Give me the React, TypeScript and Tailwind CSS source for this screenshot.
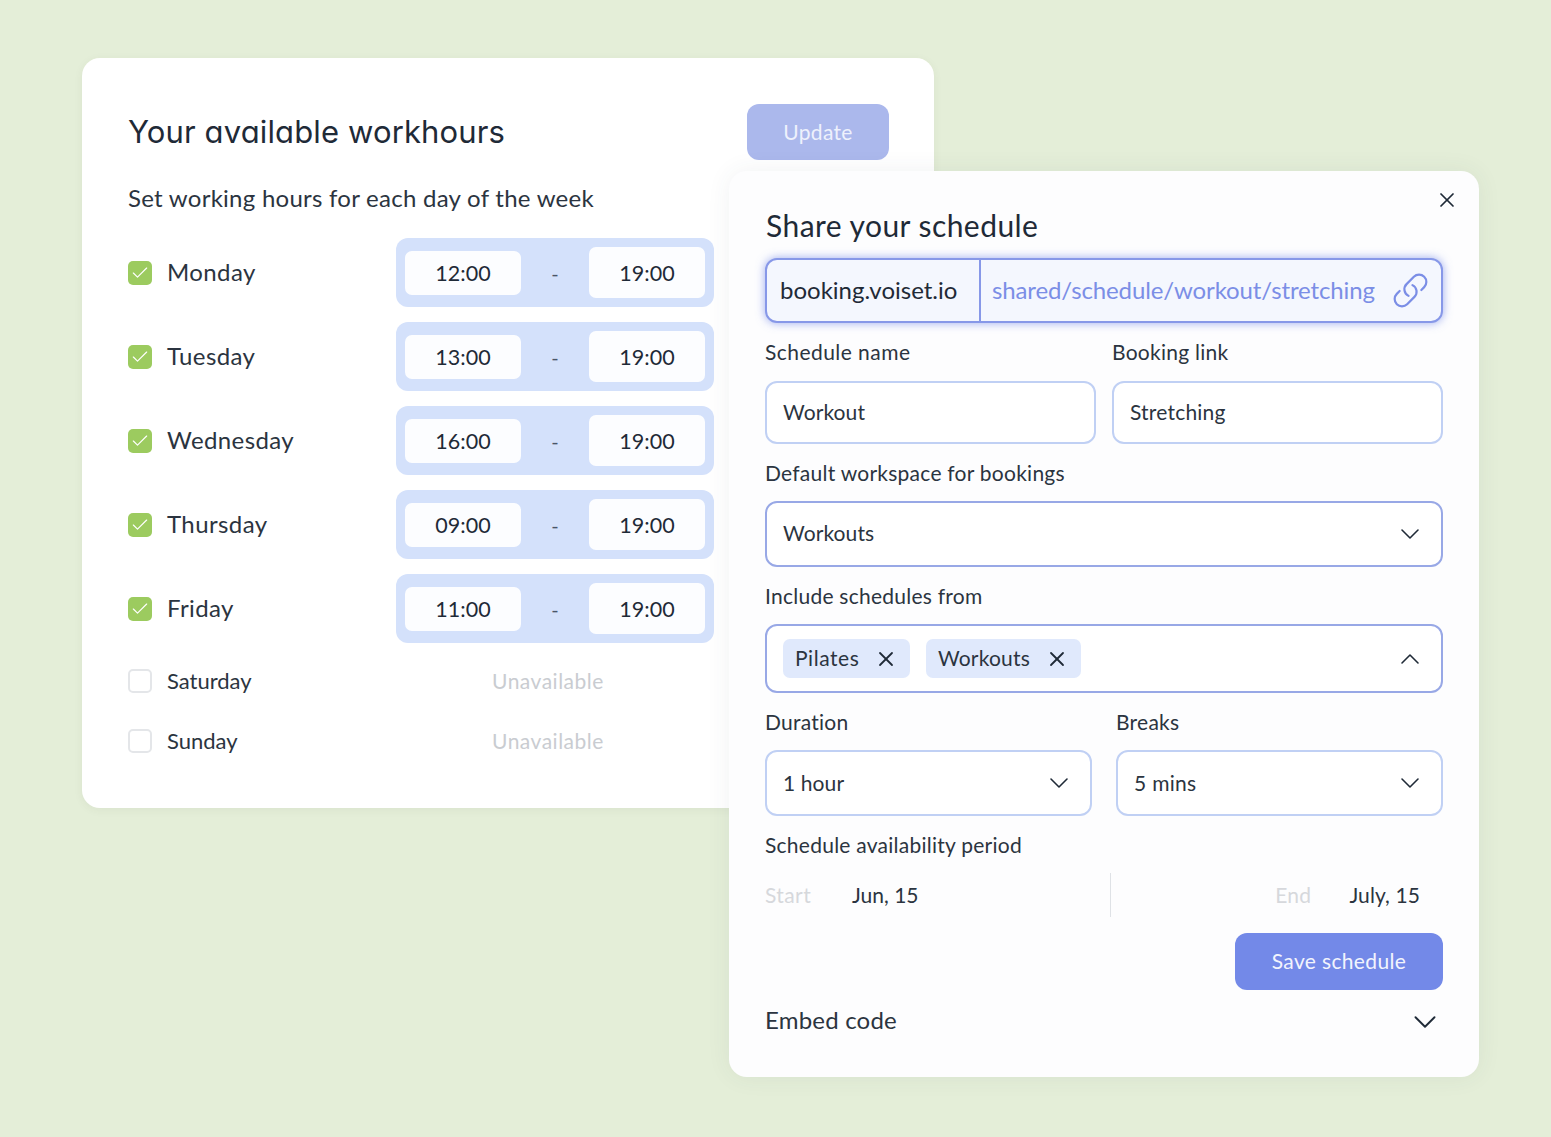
import { Check, ChevronDown, ChevronUp, X } from "lucide-react";

const workdays = [
  { name: "Monday", from: "12:00", to: "19:00" },
  { name: "Tuesday", from: "13:00", to: "19:00" },
  { name: "Wednesday", from: "16:00", to: "19:00" },
  { name: "Thursday", from: "09:00", to: "19:00" },
  { name: "Friday", from: "11:00", to: "19:00" },
];

function FieldLabel({ children }: { children: string }) {
  return <div className="flex h-[57px] items-center text-[21px] tracking-[0.25px] text-[#2b3440]">{children}</div>;
}

function Chain() {
  return (
    <svg viewBox="0 0 24 24" fill="none" stroke="currentColor" strokeWidth={1.35} strokeLinecap="round" strokeLinejoin="round" className="h-[39px] w-[39px]">
      <path d="M13.19 8.688a4.5 4.5 0 0 1 1.242 7.244l-4.5 4.5a4.5 4.5 0 0 1-6.364-6.364l1.757-1.757m13.35-.622 1.757-1.757a4.5 4.5 0 0 0-6.364-6.364l-4.5 4.5a4.5 4.5 0 0 0 1.242 7.244" />
    </svg>
  );
}

function Workhours() {
  return (
    <div className="absolute left-[82px] top-[58px] h-[750px] w-[852px] rounded-[18px] bg-white pl-[46px] pr-[45px] pt-[46px] shadow-[0_2px_10px_rgba(60,70,50,0.06)]">
      <div className="flex h-[56px] items-center justify-between">
        <h1 className="font-['Inter',sans-serif] text-[31px] font-normal tracking-[0.13px] text-[#1f2a37] [font-feature-settings:'cv11']">Your available workhours</h1>
        <button className="h-[56px] w-[142px] rounded-[12px] bg-[#abb8ec] pb-[1px] text-[21px] tracking-[0.3px] text-[#eef1fc]">Update</button>
      </div>
      <p className="flex h-[78px] items-center pb-[2px] text-[24px] tracking-[0.26px] text-[#2b3440]">Set working hours for each day of the week</p>

      <div className="flex flex-col gap-[15px]">
        {workdays.map((day) => (
          <div key={day.name} className="flex h-[69px] items-center">
            <div className="flex w-[268px] items-center gap-[15px]">
              <span className="flex h-[24px] w-[24px] items-center justify-center rounded-[5px] bg-[#9ccb5f]">
                <Check className="h-[20px] w-[20px] text-white" strokeWidth={1.4} />
              </span>
              <span className="pb-[2px] text-[24px] tracking-[0.4px] text-[#2b3440]">{day.name}</span>
            </div>
            <div className="flex h-[69px] w-[318px] items-center justify-between rounded-[12px] bg-[#d4e1fb] px-[9px]">
              <div className="flex h-[44px] w-[116px] items-center justify-center rounded-[7px] bg-[#fcfdff] pt-[1px] text-[21.5px] text-[#1f2a37]">{day.from}</div>
              <span className="text-[20px] text-[#4a5568]">-</span>
              <div className="flex h-[51px] w-[116px] items-center justify-center rounded-[7px] bg-[#fcfdff] pt-[1px] text-[21.5px] text-[#1f2a37]">{day.to}</div>
            </div>
          </div>
        ))}
      </div>

      <div className="mt-[8px]">
        {["Saturday", "Sunday"].map((name) => (
          <div key={name} className="flex h-[60px] items-center">
            <div className="flex w-[364px] items-center gap-[15px]">
              <span className="h-[24px] w-[24px] rounded-[5px] border-2 border-[#e4e6e9] bg-white" />
              <span className="pb-[2px] text-[22px] text-[#2b3440]">{name}</span>
            </div>
            <span className="text-[21px] tracking-[0.5px] text-[#c9ccd1]">Unavailable</span>
          </div>
        ))}
      </div>
    </div>
  );
}

function ShareSchedule() {
  return (
    <div className="absolute left-[729px] top-[171px] h-[906px] w-[750px] rounded-[18px] bg-[#fdfdfe] px-[36px] pt-[36px] shadow-[0_0_24px_rgba(60,70,90,0.07)]">
      <X className="absolute right-[20px] top-[17px] h-[24px] w-[24px] text-[#1f2a37]" strokeWidth={1.7} />
      <h2 className="h-[38px] pl-px text-[30px] leading-[36px] tracking-[0.45px] text-[#1f2a37]">Share your schedule</h2>

      <div className="mt-[13px] flex h-[65px] items-center rounded-[12px] border-2 border-[#8798e8] bg-[#f4f7fe] shadow-[0_0_10px_rgba(115,137,232,0.7)]">
        <div className="flex h-full w-[214px] items-center border-r-2 border-[#8798e8] pb-[2px] pl-[13px] text-[24px] text-[#1f2a37]">booking.voiset.io</div>
        <div className="flex flex-1 items-center justify-between pl-[11px] pr-[11px] text-[24px] tracking-[-0.12px] text-[#7b8ee6]">
          <span className="pb-[2px]">shared/schedule/workout/stretching</span>
          <Chain />
        </div>
      </div>

      <div className="grid grid-cols-[331px_331px] gap-x-[16px]">
        <div className="flex h-[58px] items-center text-[21px] tracking-[0.45px] text-[#2b3440]">Schedule name</div>
        <div className="flex h-[58px] items-center text-[21px] tracking-[0.25px] text-[#2b3440]">Booking link</div>
        <div className="flex h-[63px] items-center rounded-[12px] border-2 border-[#c0d0f4] bg-white pb-[2px] pl-[16px] text-[21px] tracking-[0.1px] text-[#2b3440]">Workout</div>
        <div className="flex h-[63px] items-center rounded-[12px] border-2 border-[#c0d0f4] bg-white pb-[2px] pl-[16px] text-[21px] tracking-[0.2px] text-[#2b3440]">Stretching</div>
      </div>

      <FieldLabel>Default workspace for bookings</FieldLabel>
      <div className="flex h-[66px] items-center justify-between rounded-[12px] border-2 border-[#98a8e6] bg-white pl-[16px] pr-[15px] text-[21px] tracking-[0.1px] text-[#2b3440]">
        <span className="pb-[2px]">Workouts</span>
        <ChevronDown className="h-[32px] w-[32px] text-[#1f2a37]" strokeWidth={1.2} />
      </div>

      <FieldLabel>Include schedules from</FieldLabel>
      <div className="flex h-[69px] items-center justify-between rounded-[12px] border-2 border-[#98a8e6] bg-white pl-[16px] pr-[15px]">
        <div className="flex gap-[16px]">
          <div className="flex h-[39px] w-[127px] items-center justify-between rounded-[7px] bg-[#e0e9fc] pl-[12px] pr-[12px] text-[21px] tracking-[0.55px] text-[#2b3440]">
            <span className="pb-[1px]">Pilates</span>
            <X className="h-[24px] w-[24px] text-[#1f2a37]" strokeWidth={1.8} />
          </div>
          <div className="flex h-[39px] w-[155px] items-center justify-between rounded-[7px] bg-[#e0e9fc] pl-[12px] pr-[12px] text-[21px] tracking-[0.2px] text-[#2b3440]">
            <span className="pb-[1px]">Workouts</span>
            <X className="h-[24px] w-[24px] text-[#1f2a37]" strokeWidth={1.8} />
          </div>
        </div>
        <ChevronUp className="h-[32px] w-[32px] text-[#1f2a37]" strokeWidth={1.2} />
      </div>

      <div className="grid grid-cols-[327px_327px] gap-x-[24px]">
        <FieldLabel>Duration</FieldLabel>
        <FieldLabel>Breaks</FieldLabel>
        <div className="flex h-[66px] items-center justify-between rounded-[12px] border-2 border-[#c0d0f4] bg-white pl-[16px] pr-[15px] text-[21px] tracking-[0.1px] text-[#2b3440]">
          <span className="pb-[1px]">1 hour</span>
          <ChevronDown className="h-[32px] w-[32px] text-[#1f2a37]" strokeWidth={1.2} />
        </div>
        <div className="flex h-[66px] items-center justify-between rounded-[12px] border-2 border-[#c0d0f4] bg-white pl-[16px] pr-[15px] text-[21px] tracking-[0.3px] text-[#2b3440]">
          <span className="pb-[1px]">5 mins</span>
          <ChevronDown className="h-[32px] w-[32px] text-[#1f2a37]" strokeWidth={1.2} />
        </div>
      </div>

      <FieldLabel>Schedule availability period</FieldLabel>
      <div className="flex h-[44px] items-center text-[21px]">
        <div className="flex w-[345px] items-center">
          <span className="w-[87px] tracking-[0.4px] text-[#d6d8dc]">Start</span>
          <span className="text-[#2b3440]">Jun, 15</span>
        </div>
        <div className="h-[44px] w-px bg-[#dfe2e6]" />
        <div className="flex flex-1 items-center justify-end gap-[38px] pr-[23px]">
          <span className="tracking-[0.3px] text-[#d6d8dc]">End</span>
          <span className="tracking-[0.1px] text-[#2b3440]">July, 15</span>
        </div>
      </div>

      <div className="mt-[16px] flex justify-end">
        <button className="h-[57px] w-[208px] rounded-[12px] bg-[#7389e8] pb-[2px] text-[21px] tracking-[0.35px] text-[#f2f4fd]">Save schedule</button>
      </div>

      <div className="flex h-[62px] items-center justify-between pb-[2px] text-[24px] tracking-[0.2px] text-[#2b3440]">
        Embed code
        <ChevronDown className="-mr-[1px] mt-[3px] h-[38px] w-[38px] text-[#1f2a37]" strokeWidth={1.2} />
      </div>
    </div>
  );
}

export default function App() {
  return (
    <div className="relative h-[1137px] w-full overflow-hidden bg-[#e4eed8] font-['Lato','Noto_Sans',sans-serif]">
      <Workhours />
      <ShareSchedule />
    </div>
  );
}
